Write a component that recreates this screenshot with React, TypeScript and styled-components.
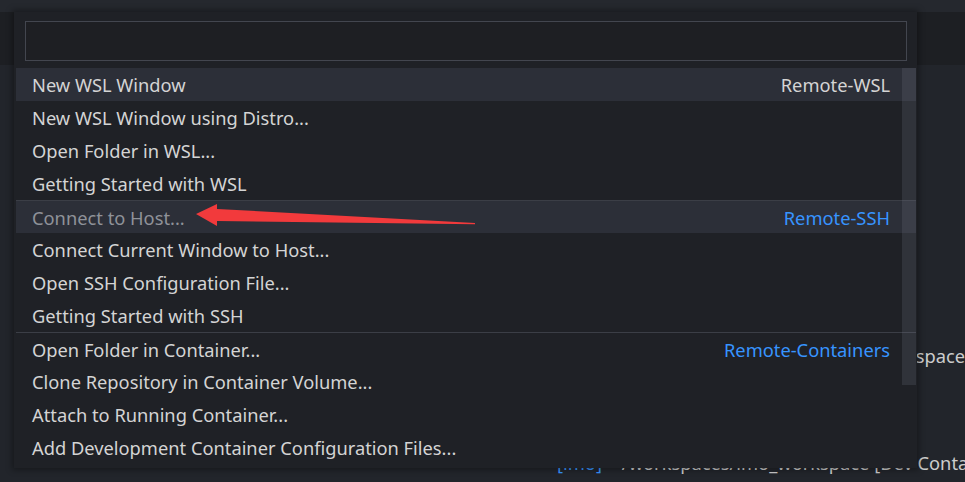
import React from 'react';
import styled, {createGlobalStyle} from 'styled-components';

type Item = {
    label: string
    detail?: string
    kind?: 'focused' | 'hovered'
    separator?: boolean
}

const items: Item[] = [
    {label: 'New WSL Window', detail: 'Remote-WSL', kind: 'focused'},
    {label: 'New WSL Window using Distro...'},
    {label: 'Open Folder in WSL...'},
    {label: 'Getting Started with WSL'},
    {label: 'Connect to Host...', detail: 'Remote-SSH', kind: 'hovered', separator: true},
    {label: 'Connect Current Window to Host...'},
    {label: 'Open SSH Configuration File...'},
    {label: 'Getting Started with SSH'},
    {label: 'Open Folder in Container...', detail: 'Remote-Containers', separator: true},
    {label: 'Clone Repository in Container Volume...'},
    {label: 'Attach to Running Container...'},
    {label: 'Add Development Container Configuration Files...'},
]

const GlobalStyle = createGlobalStyle`
    html, body {
        margin: 0;
        padding: 0;
        background: #22252b;
        overflow: hidden;
    }
    * {
        box-sizing: border-box;
    }
`

export default function App() {
    return (
        <>
            <GlobalStyle/>
            <StyledPage>
                <StyledTitleBar/>
                <StyledEditor>
                    <StyledTabStrip/>
                    <StyledEditorBody>
                        <StyledLine $top={343} $left={873}>
                            <StyledText>workspace</StyledText>
                        </StyledLine>
                        <StyledLine $top={450} $left={557}>
                            <StyledLink>[lmo]</StyledLink>
                            <StyledText>{'  ~/workspaces/lmo_workspace [Dev Container]'}</StyledText>
                        </StyledLine>
                    </StyledEditorBody>
                </StyledEditor>

                <StyledQuickPick>
                    <StyledInputRow>
                        <StyledInput/>
                    </StyledInputRow>
                    <StyledList>
                        {items.map((item) => (
                            <StyledRow key={item.label} $kind={item.kind} $separator={item.separator}>
                                <StyledLabel $dim={item.kind === 'hovered'}>{item.label}</StyledLabel>
                                {item.detail && (
                                    <StyledDetail $plain={item.kind === 'focused'}>{item.detail}</StyledDetail>
                                )}
                            </StyledRow>
                        ))}
                        <StyledScrollbar/>
                    </StyledList>
                    {/* red annotation arrow pointing at "Connect to Host..." */}
                    <StyledArrow width="300" height="30" viewBox="0 0 300 30">
                        <path d="M0 8 L21 -2 L21 3 L279 17 L279 18.2 L21 15 L21 20 Z" fill="#f23a3c"/>
                    </StyledArrow>
                </StyledQuickPick>
            </StyledPage>
        </>
    )
}

const StyledPage = styled.div`
    position: relative;
    width: 965px;
    height: 482px;
    display: flex;
    flex-direction: column;
    font-family: "Noto Sans", "Open Sans", sans-serif;
    background: #22252b;
`
const StyledTitleBar = styled.div`
    height: 12px;
    background: #25282e;
    flex-shrink: 0;
`
const StyledEditor = styled.div`
    flex: 1;
    display: flex;
    flex-direction: column;
`
const StyledTabStrip = styled.div`
    height: 53px;
    background: #1d1f23;
    flex-shrink: 0;
`
const StyledEditorBody = styled.div`
    position: relative;
    flex: 1;
    background: #22252b;
`
const StyledLine = styled.div<{ $top: number, $left: number }>`
    position: absolute;
    top: ${props => props.$top - 65}px;
    left: ${props => props.$left}px;
    white-space: pre;
    font-size: 18.3px;
    line-height: 26px;
`
const StyledText = styled.span`
    color: #cccccc;
`
const StyledLink = styled.span`
    color: #3794ff;
`
const StyledQuickPick = styled.div`
    position: absolute;
    top: 12px;
    left: 14px;
    width: 903px;
    height: 456px;
    background: #1f2126;
    box-shadow: 0 0 6px 2px rgba(0, 0, 0, 0.35);
    padding: 0 1px 0 2px;
    display: flex;
    flex-direction: column;
`
const StyledInputRow = styled.div`
    padding: 9px 9px 7px 9px;
`
const StyledInput = styled.div`
    height: 40px;
    border: 1px solid #43464f;
    background: #1e1f23;
`
const StyledList = styled.div`
    position: relative;
    display: flex;
    flex-direction: column;
`
const StyledRow = styled.div<{ $kind?: 'focused' | 'hovered', $separator?: boolean }>`
    height: 33px;
    display: flex;
    align-items: center;
    justify-content: space-between;
    padding: 0 26px 0 16px;
    font-size: 18.3px;
    background: ${props => props.$kind ? '#2c2f38' : 'transparent'};
    border-top: ${props => props.$separator ? '1px solid #3b3e46' : 'none'};
`
const StyledLabel = styled.span<{ $dim?: boolean }>`
    color: ${props => props.$dim ? '#8f9299' : '#d4d4d4'};
    white-space: nowrap;
`
const StyledDetail = styled.span<{ $plain?: boolean }>`
    color: ${props => props.$plain ? '#d4d4d4' : '#3794ff'};
    white-space: nowrap;
`
const StyledScrollbar = styled.div`
    position: absolute;
    top: 0;
    right: 0;
    width: 14px;
    height: 317px;
    background: rgba(121, 126, 140, 0.2);
`
const StyledArrow = styled.svg`
    position: absolute;
    left: 182px;
    top: 194px;
    overflow: visible;
`
